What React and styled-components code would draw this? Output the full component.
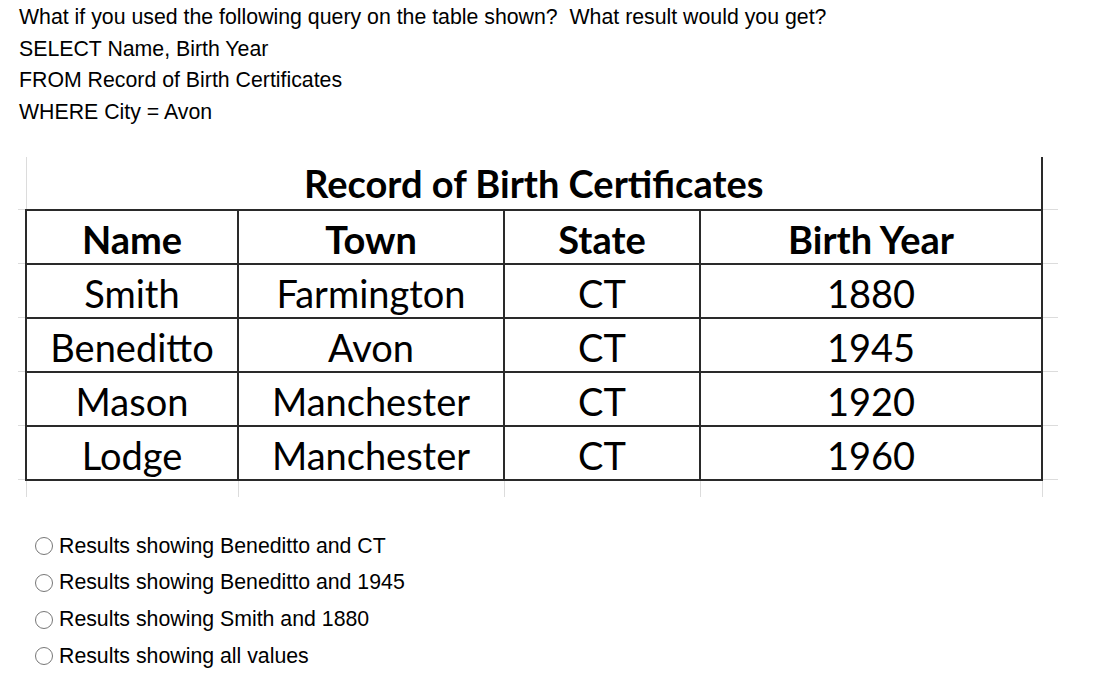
import React from "react";
import styled, { createGlobalStyle } from "styled-components";

const GlobalStyle = createGlobalStyle`
  body {
    margin: 0;
    background: #fff;
    color: #000;
    font-family: "Liberation Sans", Arial, sans-serif;
  }
`;

const Page = styled.div`
  padding: 2px 0 0 19px;
`;

const QueryBlock = styled.div`
  display: flex;
  flex-direction: column;
`;

const QueryLine = styled.div`
  font-size: 21.3px;
  line-height: 31.7px;
  white-space: nowrap;
`;

const Sheet = styled.table`
  border-collapse: collapse;
  table-layout: fixed;
  margin: 28px 0 0 -1px;
  font-family: Lato, "Open Sans", sans-serif;
  color: #000;
`;

const Stub = styled.td`
  padding: 0;
  border-bottom: ${(p) => (p.$tail ? "none" : "1px solid #dcdcdc")};
`;

const TitleCell = styled.td`
  height: 52px;
  padding: 0;
  text-align: center;
  font-weight: 700;
  font-size: 38px;
  line-height: 1;
  border-left: 1px solid #dcdcdc;
  border-right: 2px solid #2a2a2a;
  border-bottom: 2px solid #2a2a2a;
  vertical-align: middle;
`;

const Cell = styled.td`
  height: 48px;
  padding: 4px 0 0;
  text-align: center;
  font-size: 38px;
  font-weight: ${(p) => (p.$head ? 700 : 400)};
  border: 2px solid #2a2a2a;
  vertical-align: middle;
  line-height: 1;
`;

const TailCell = styled.td`
  height: 16px;
  padding: 0;
  border-left: 1px solid #dcdcdc;
  border-right: 1px solid #dcdcdc;
`;

const Options = styled.div`
  display: flex;
  flex-direction: column;
  margin: 31px 0 0 16px;
`;

const Option = styled.label`
  display: flex;
  align-items: center;
  gap: 6px;
  height: 36.7px;
  font-size: 21.3px;
  white-space: nowrap;
`;

const Radio = styled.span`
  width: 16px;
  height: 16px;
  border: 1.5px solid #777;
  border-radius: 50%;
  flex: none;
`;

const columns = [8, 212, 266, 196, 342, 16];

const header = ["Name", "Town", "State", "Birth Year"];

const rows = [
  ["Smith", "Farmington", "CT", "1880"],
  ["Beneditto", "Avon", "CT", "1945"],
  ["Mason", "Manchester", "CT", "1920"],
  ["Lodge", "Manchester", "CT", "1960"],
];

const answers = [
  "Results showing Beneditto and CT",
  "Results showing Beneditto and 1945",
  "Results showing Smith and 1880",
  "Results showing all values",
];

export default function App() {
  return (
    <>
      <GlobalStyle />
      <Page>
        <QueryBlock>
          <QueryLine>
            What if you used the following query on the table shown?&nbsp; What result would you get?
          </QueryLine>
          <QueryLine>SELECT Name, Birth Year</QueryLine>
          <QueryLine>FROM Record of Birth Certificates</QueryLine>
          <QueryLine>WHERE City = Avon</QueryLine>
        </QueryBlock>

        <Sheet>
          <colgroup>
            {columns.map((w, i) => (
              <col key={i} style={{ width: w }} />
            ))}
          </colgroup>
          <tbody>
            <tr>
              <Stub />
              <TitleCell colSpan={4}>Record of Birth Certificates</TitleCell>
              <Stub />
            </tr>
            <tr>
              <Stub />
              {header.map((h) => (
                <Cell key={h} $head>
                  {h}
                </Cell>
              ))}
              <Stub />
            </tr>
            {rows.map((r) => (
              <tr key={r[0]}>
                <Stub />
                {r.map((v, i) => (
                  <Cell key={i}>{v}</Cell>
                ))}
                <Stub />
              </tr>
            ))}
            <tr>
              <Stub $tail />
              <TailCell />
              <TailCell />
              <TailCell />
              <TailCell />
              <Stub $tail />
            </tr>
          </tbody>
        </Sheet>

        <Options>
          {answers.map((a) => (
            <Option key={a}>
              <Radio />
              {a}
            </Option>
          ))}
        </Options>
      </Page>
    </>
  );
}
